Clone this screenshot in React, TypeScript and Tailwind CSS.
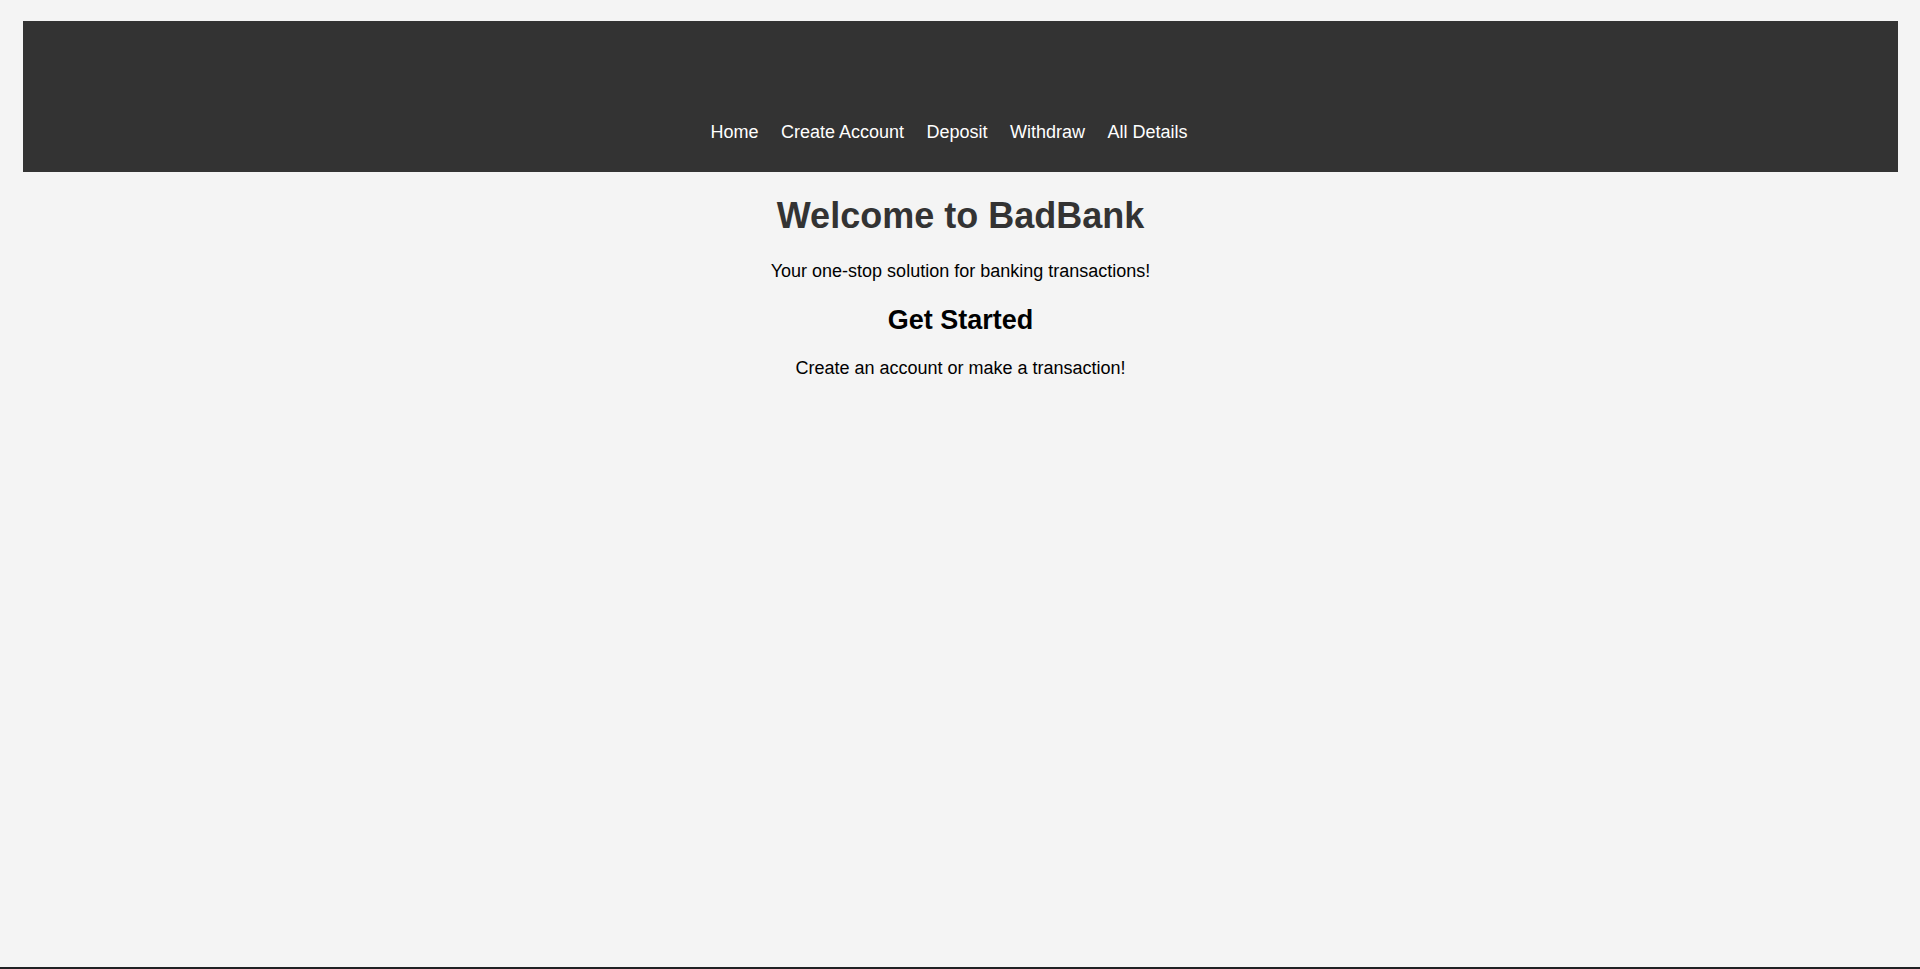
const links = ["Home", "Create Account", "Deposit", "Withdraw", "All Details"];

export default function App() {
  return (
    <div className="flex h-[969px] flex-col bg-[#f4f4f4] font-['Liberation_Sans',Arial,sans-serif]">
      <div className="flex flex-1 flex-col pl-[23px] pr-[22px] pt-[21px]">
        {/* Top bar */}
        <header className="flex h-[151px] flex-col justify-end bg-[#333333] pb-[29px] pr-[23px]">
          <nav className="flex justify-center gap-[22.5px]">
            {links.map((link) => (
              <a
                key={link}
                href="#"
                className="text-[18px] leading-[21px] text-white"
              >
                {link}
              </a>
            ))}
          </nav>
        </header>

        {/* Home content */}
        <main className="text-center">
          <h1 className="mt-[23px] text-[36px] font-bold leading-[41px] text-[#333333]">
            Welcome to BadBank
          </h1>
          <p className="mt-[25px] text-[18px] leading-[21px] text-black">
            Your one-stop solution for banking transactions!
          </p>
          <h2 className="mt-[23px] text-[27px] font-bold leading-[31px] text-black">
            Get Started
          </h2>
          <p className="mt-[22px] text-[18px] leading-[21px] text-black">
            Create an account or make a transaction!
          </p>
        </main>
      </div>
      <div className="h-[2px] bg-[#202124]" />
    </div>
  );
}
